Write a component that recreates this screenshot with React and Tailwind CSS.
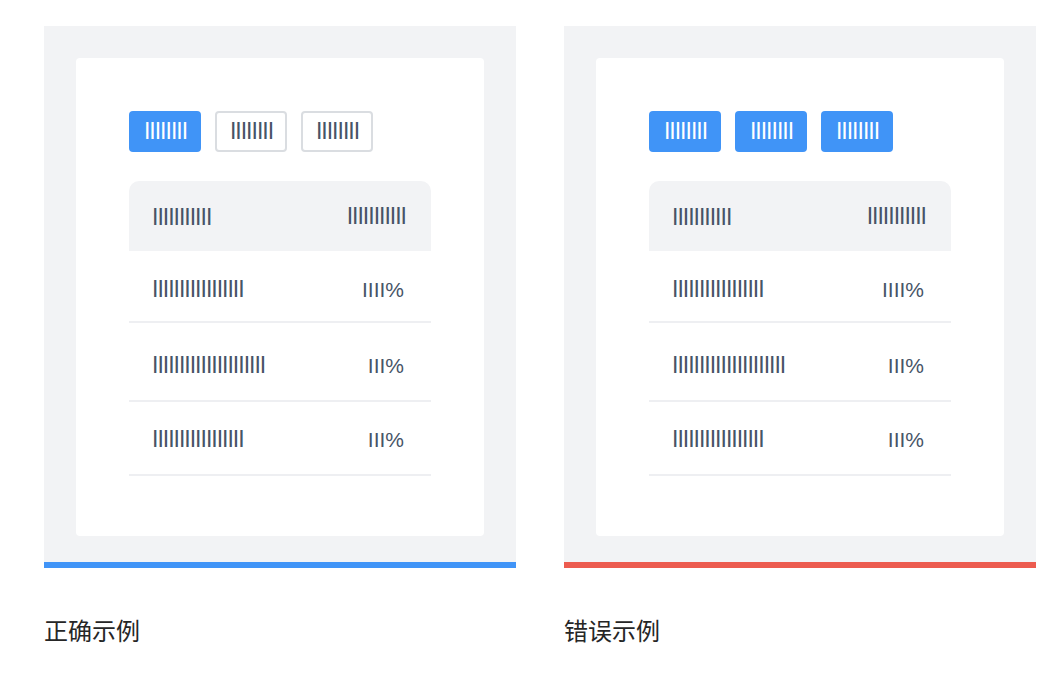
const bars = (n) => 'I'.repeat(n);

const rows = [
  { name: bars(17), value: 'IIII%', cls: 'h-[72px] pt-[6px]' },
  { name: bars(21), value: 'III%', cls: 'h-[79px] pt-[7px]' },
  { name: bars(17), value: 'III%', cls: 'h-[74px] pt-[2px]' },
];

function Tabs({ allBlue }) {
  return (
    <div className="flex gap-[14px]">
      {[0, 1, 2].map((i) =>
        i === 0 || allBlue ? (
          <div
            key={i}
            className="flex h-[41px] w-[72px] items-center justify-center rounded-[4px] bg-[#4094f7] pl-[1px] text-[23px] leading-none tracking-[-1px] text-white"
          >
            {bars(8)}
          </div>
        ) : (
          <div
            key={i}
            className="flex h-[41px] w-[72px] items-center justify-center rounded-[4px] border-2 border-[#dadde1] bg-white pl-[1px] text-[23px] leading-none tracking-[-1px] text-[#475467]"
          >
            {bars(8)}
          </div>
        )
      )}
    </div>
  );
}

function Panel({ wrong }) {
  return (
    <div className="flex w-[472px] flex-col">
      <div className="bg-[#f2f3f5] px-[32px] pb-[26px] pt-[32px]">
        <div className="h-[478px] rounded-[4px] bg-white px-[53px] pt-[53px]">
          <Tabs allBlue={wrong} />

          {/* table */}
          <div className="mt-[29px] text-[#475467]">
            <div className="flex h-[70px] items-center justify-between rounded-t-[10px] bg-[#f2f3f5] pl-[23px] pr-[25px]">
              <span className="mt-[3px] text-[23px] leading-none tracking-[-1px]">{bars(11)}</span>
              <span className="text-[23px] leading-none tracking-[-1px]">{bars(11)}</span>
            </div>
            {rows.map((r, i) => (
              <div
                key={i}
                className={`flex items-center justify-between border-b-2 border-[#eeeff2] pl-[23px] pr-[27px] ${r.cls}`}
              >
                <span className="text-[23px] leading-none tracking-[-1px]">{r.name}</span>
                <span className="text-[21px] leading-none">{r.value}</span>
              </div>
            ))}
          </div>
        </div>
      </div>
      <div className={wrong ? 'h-[6px] bg-[#ec5b4f]' : 'h-[6px] bg-[#4094f7]'} />
    </div>
  );
}

export default function App() {
  return (
    <div className="min-h-screen bg-white pl-[44px] pt-[26px] font-['Liberation_Sans',sans-serif]">
      <div className="flex gap-[48px]">
        <div className="flex flex-col">
          <Panel />
          <p className="mt-[50px] font-['Noto_Sans_CJK_SC',sans-serif] text-[24px] leading-none text-[#262626]">
            正确示例
          </p>
        </div>
        <div className="flex flex-col">
          <Panel wrong />
          <p className="mt-[50px] font-['Noto_Sans_CJK_SC',sans-serif] text-[24px] leading-none text-[#262626]">
            错误示例
          </p>
        </div>
      </div>
    </div>
  );
}
